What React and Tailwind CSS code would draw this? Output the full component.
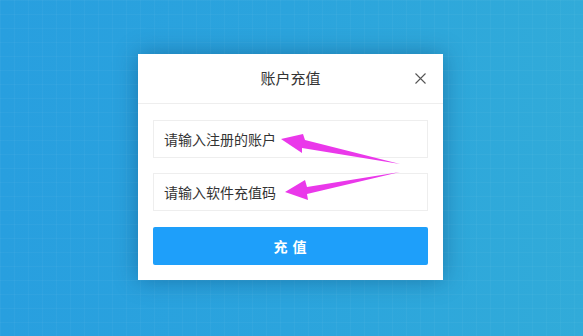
import React from "react";

export default function App() {
  return (
    <div
      className="relative w-[583px] h-[336px] overflow-hidden bg-[linear-gradient(90deg,#289fdf_0%,#2ba4dd_50%,#31abd9_100%)] flex justify-center items-start pt-[54px] pr-[2px]"
      style={{ fontFamily: '"Noto Sans CJK SC", "Noto Sans", sans-serif' }}
    >
      <div className="absolute inset-0 bg-[linear-gradient(rgba(255,255,255,0.03)_1px,transparent_1px),linear-gradient(90deg,rgba(255,255,255,0.03)_1px,transparent_1px)] bg-[size:14px_14px]" />
      <div className="relative w-[305px] bg-white shadow-[0_0_22px_rgba(0,40,80,0.35)]">
        <div className="relative h-[50px] flex items-center justify-center border-b border-[#eeeeee]">
          <span className="text-[15px] text-[#333333]">账户充值</span>
          <svg className="absolute right-[17px] top-[19px]" width="11" height="11" viewBox="0 0 11 11">
            <path d="M0.5 0.5L10.5 10.5M10.5 0.5L0.5 10.5" stroke="#555" strokeWidth="1.1" />
          </svg>
        </div>
        <div className="px-[15px] pt-[16px] pb-[15px] flex flex-col">
          <div className="h-[38px] border border-[#eeeeee] flex items-center pl-[10px] text-[14px] text-[#333333]">
            请输入注册的账户
          </div>
          <div className="mt-[15px] h-[38px] border border-[#eeeeee] flex items-center pl-[10px] text-[14px] text-[#333333]">
            请输入软件充值码
          </div>
          <div className="mt-[16px] h-[38px] bg-[#1e9ffa] rounded-[2px] flex items-center justify-center text-white text-[14px] font-bold tracking-[1px]">
            充 值
          </div>
        </div>
      </div>
      <svg className="absolute left-0 top-0" width="583" height="336" viewBox="0 0 583 336">
        <polygon
          points="281,139 303,134 305,140 400,164 302,148 302,153"
          fill="#ea38ea"
        />
        <polygon
          points="285,192 305,180 307,187 400,172 307,194 308,200"
          fill="#ea38ea"
        />
      </svg>
    </div>
  );
}
